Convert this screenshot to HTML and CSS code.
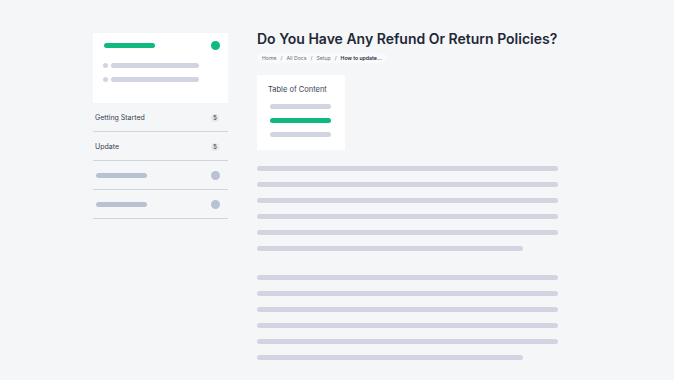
FILE: index.html
```html
<!DOCTYPE html>
<html>
<head>
<meta charset="utf-8">
<link rel="stylesheet" href="styles.css">
</head>
<body>
<div class="page">
  <aside class="sidebar">
    <div class="card">
      <div class="card-head">
        <span class="bar green w51"></span>
        <span class="dot green-dot"></span>
      </div>
      <div class="card-row"><span class="bullet"></span><span class="bar grey w88"></span></div>
      <div class="card-row"><span class="bullet"></span><span class="bar grey w88"></span></div>
    </div>
    <ul class="nav">
      <li class="nav-item"><span class="nav-label">Getting Started</span><span class="badge">5</span></li>
      <li class="nav-item"><span class="nav-label">Update</span><span class="badge">5</span></li>
      <li class="nav-item"><span class="bar slate w51"></span><span class="dot slate-dot"></span></li>
      <li class="nav-item"><span class="bar slate w51"></span><span class="dot slate-dot"></span></li>
    </ul>
  </aside>
  <main class="main">
    <h1 class="title">Do You Have Any Refund Or Return Policies?</h1>
    <nav class="crumbs"><span>Home</span><span class="sep">/</span><span>All Docs</span><span class="sep">/</span><span>Setup</span><span class="sep">/</span><span class="current">How to update...</span></nav>
    <div class="toc">
      <div class="toc-title">Table of Content</div>
      <span class="bar grey toc-bar"></span>
      <span class="bar green toc-bar"></span>
      <span class="bar grey toc-bar"></span>
    </div>
    <div class="para">
      <span class="bar grey line"></span>
      <span class="bar grey line"></span>
      <span class="bar grey line"></span>
      <span class="bar grey line"></span>
      <span class="bar grey line"></span>
      <span class="bar grey line short"></span>
    </div>
    <div class="para">
      <span class="bar grey line"></span>
      <span class="bar grey line"></span>
      <span class="bar grey line"></span>
      <span class="bar grey line"></span>
      <span class="bar grey line"></span>
      <span class="bar grey line short"></span>
    </div>
  </main>
</div>
</body>
</html>
```
FILE: styles.css
```css
* { box-sizing: border-box; }
html, body { margin: 0; padding: 0; }
body {
  background: #f5f6f8;
  font-family: Inter, "Noto Sans", sans-serif;
  width: 674px;
  height: 380px;
  overflow: hidden;
}
.page {
  display: flex;
  gap: 29px;
  padding: 33px 0 0 93px;
}
.sidebar { width: 135px; flex: none; }
.card {
  background: #ffffff;
  height: 70px;
  padding: 8px 8px 0 10px;
}
.card-head {
  display: flex;
  justify-content: space-between;
  align-items: center;
  height: 9px;
  margin-bottom: 13px;
  padding-left: 1px;
}
.card-row {
  display: flex;
  align-items: center;
  gap: 3px;
  height: 5px;
  margin-bottom: 9px;
}
.bar { display: block; height: 5px; border-radius: 3px; }
.green { background: #10b981; }
.grey { background: #d0d5e1; }
.slate { background: #b9c2d2; }
.w51 { width: 51px; }
.w88 { width: 88px; }
.dot { display: block; width: 9px; height: 9px; border-radius: 50%; }
.green-dot { background: #10b981; }
.slate-dot { background: #b9c2d2; }
.bullet { display: block; width: 5px; height: 5px; border-radius: 50%; background: #d0d5e1; }
.nav { list-style: none; margin: 0; padding: 0; }
.nav-item {
  display: flex;
  justify-content: space-between;
  align-items: center;
  height: 29px;
  border-bottom: 1px solid #cfd4de;
  padding: 1px 8px 0 2px;
}
.nav-item .bar { margin-left: 1px; }
.nav-label { font-size: 7px; color: #374151; font-weight: 400; }
.badge {
  width: 8px; height: 8px; border-radius: 50%;
  background: #e6e8ec;
  font-size: 5.5px; font-weight: 600; color: #3a4150;
  display: flex; align-items: center; justify-content: center;
  margin-right: 1px;
}
.main { width: 301px; flex: none; }
.title {
  margin: 0;
  font-size: 14px;
  line-height: 11px;
  font-weight: 600;
  color: #1f2937;
  white-space: nowrap;
  padding-top: 0;
}
.crumbs {
  display: inline-flex;
  align-items: center;
  gap: 4px;
  margin-top: 9px;
  height: 10px;
  padding: 0 5px;
  border-radius: 5px;
  background: #f9fafb;
  font-size: 5.2px;
  color: #6b7280;
}
.crumbs .current { color: #1f2937; font-weight: 600; }
.toc {
  width: 88px;
  height: 75px;
  background: #ffffff;
  margin-top: 11px;
  padding: 10px 0 0 13px;
}
.toc-title { font-size: 7.5px; color: #374151; line-height: 9px; margin-left: -2px; margin-bottom: 10px; }
.toc-bar { width: 61px; height: 5px; margin-bottom: 9px; }
.para { display: flex; flex-direction: column; gap: 11px; margin-top: 16px; }
.para + .para { margin-top: 24px; }
.line { width: 301px; }
.line.short { width: 266px; }
```
